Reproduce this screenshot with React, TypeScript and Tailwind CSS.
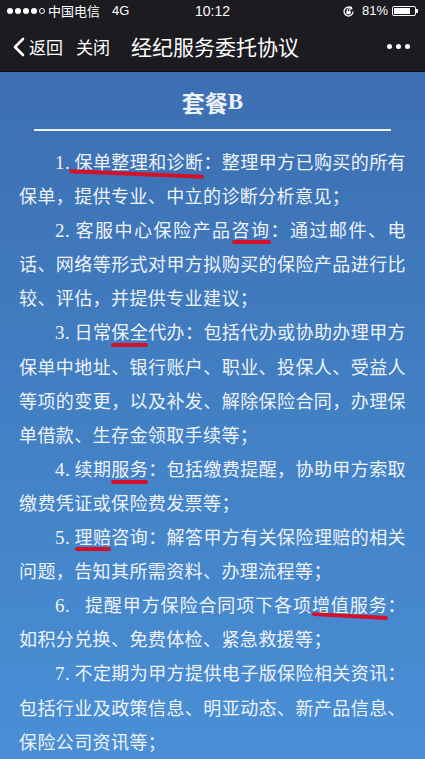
import React from "react";

const CJK = '"Noto Sans CJK SC", "Noto Sans", sans-serif';
const SERIF = '"Liberation Serif", "Noto Sans CJK SC", serif';

/** --- red hand-drawn mark under a phrase --- */
const Mark: React.FC<{ children: React.ReactNode; cls: string }> = ({ children, cls }) => (
  <span className="relative">
    {children}
    <span className={`absolute h-[4px] rounded-full bg-[#d3122a] ${cls}`} />
  </span>
);

const Num: React.FC<{ n: string }> = ({ n }) => (
  <span className="text-[19px] leading-none" style={{ fontFamily: SERIF }}>
    {n}
  </span>
);

// full line: stretched edge to edge
const Full: React.FC<{ children: React.ReactNode; indent?: boolean }> = ({ children, indent }) => (
  <div className={`h-[34.1px] overflow-visible text-justify [text-align-last:justify] whitespace-nowrap ${indent ? "pl-[36px]" : ""}`}>
    {children}
  </div>
);

// last line of a paragraph
const Last: React.FC<{ children: React.ReactNode }> = ({ children }) => (
  <div className="h-[34.1px] whitespace-nowrap">{children}</div>
);

const StatusBar = () => (
  <div className="grid h-[22px] grid-cols-[1fr_auto_1fr] items-center bg-[#1c1b20] px-[7px] text-[13px] text-white">
    <div className="flex items-center">
      <div className="flex items-center gap-[2px]">
        <span className="h-[6px] w-[6px] rounded-full bg-white" />
        <span className="h-[6px] w-[6px] rounded-full bg-white" />
        <span className="h-[6px] w-[6px] rounded-full bg-white" />
        <span className="h-[6px] w-[6px] rounded-full bg-white" />
        <span className="h-[6px] w-[6px] rounded-full border border-white" />
      </div>
      <span className="ml-[3px]">中国电信</span>
      <span className="ml-[12px]" style={{ fontFamily: '"Liberation Sans", sans-serif' }}>4G</span>
    </div>
    <div className="text-[14px] font-medium" style={{ fontFamily: '"Liberation Sans", sans-serif' }}>
      10:12
    </div>
    <div className="flex items-center justify-end" style={{ fontFamily: '"Liberation Sans", sans-serif' }}>
      <svg width="13" height="13" viewBox="0 0 13 13" className="mr-[7px]">
        <path d="M11 6.5a4.5 4.5 0 1 1-1.6-3.45" fill="none" stroke="white" strokeWidth="1.3" />
        <path d="M9.2 1.6l0.6 2.1-2.1 0.3" fill="none" stroke="white" strokeWidth="1.2" />
        <rect x="4.3" y="6" width="4.4" height="3.2" rx="0.5" fill="white" />
        <path d="M5.2 6V5a1.3 1.3 0 0 1 2.6 0v1" fill="none" stroke="white" strokeWidth="1" />
      </svg>
      <span>81%</span>
      <div className="ml-[4px] flex items-center">
        <div className="h-[10px] w-[24px] rounded-[2px] border border-white p-[1px]">
          <div className="h-full w-[80%] bg-white" />
        </div>
        <div className="h-[4px] w-[2px] rounded-r-[1px] bg-white" />
      </div>
    </div>
  </div>
);

const NavBar = () => (
  <div className="flex h-[50px] items-center border-b border-[#101014] bg-[#1c1b20] text-white">
    <svg width="14" height="20" viewBox="0 0 14 20" className="ml-[12px]">
      <path d="M11 2L3 10l8 8" fill="none" stroke="white" strokeWidth="2.6" strokeLinecap="round" strokeLinejoin="round" />
    </svg>
    <span className="ml-[3px] text-[17px]">返回</span>
    <span className="ml-[13px] text-[17px]">关闭</span>
    <span className="ml-[21px] text-[21px]">经纪服务委托协议</span>
    <div className="ml-auto mr-[15px] flex gap-[4px]">
      <span className="h-[5px] w-[5px] rounded-full bg-white" />
      <span className="h-[5px] w-[5px] rounded-full bg-white" />
      <span className="h-[5px] w-[5px] rounded-full bg-white" />
    </div>
  </div>
);

export default function App() {
  return (
    <div className="flex min-h-[759px] w-full flex-col" style={{ fontFamily: CJK }}>
      <StatusBar />
      <NavBar />
      <div className="flex-1 bg-gradient-to-b from-[#3c6fb1] via-[#4280c4] to-[#4a8fd6] pb-[4px]">
        <div className="mt-[15px] flex h-[30px] items-center justify-center text-[23px] font-bold text-[#eef3fa]">
          套餐<span style={{ fontFamily: SERIF }}>B</span>
        </div>
        <div className="mx-[34px] mt-[12px] h-[2px] bg-[#eef3fa]" />
        <div className="mt-[13px] px-[19px] text-[18px] leading-[34px] tracking-[0.4px] text-[#eef3fa]">
          <Full indent>
            <Num n="1." /> <Mark cls="-left-[6px] right-0 top-[calc(50%+11px)] rotate-[2.5deg]">保单整理和诊断</Mark>：整理甲方已购买的所有
          </Full>
          <Last>保单，提供专业、中立的诊断分析意见；</Last>

          <Full indent>
            <Num n="2." /> 客服中心保险产品<Mark cls="left-0 right-0 top-[calc(50%+11px)]">咨询</Mark>：通过邮件、电
          </Full>
          <Full>话、网络等形式对甲方拟购买的保险产品进行比</Full>
          <Last>较、评估，并提供专业建议；</Last>

          <Full indent>
            <Num n="3." /> 日常<Mark cls="left-0 right-0 top-[calc(50%+12px)]">保全</Mark>代办：包括代办或协助办理甲方
          </Full>
          <Full>保单中地址、银行账户、职业、投保人、受益人</Full>
          <Full>等项的变更，以及补发、解除保险合同，办理保</Full>
          <Last>单借款、生存金领取手续等；</Last>

          <Full indent>
            <Num n="4." /> 续期<Mark cls="left-0 right-0 top-[calc(50%+12px)]">服务</Mark>：包括缴费提醒，协助甲方索取
          </Full>
          <Last>缴费凭证或保险费发票等；</Last>

          <Full indent>
            <Num n="5." /> <Mark cls="left-0 right-0 top-[calc(50%+11px)]">理赔</Mark>咨询：解答甲方有关保险理赔的相关
          </Full>
          <Last>问题，告知其所需资料、办理流程等；</Last>

          <Full indent>
            <Num n="6." />&nbsp;&nbsp; 提醒甲方保险合同项下各项<Mark cls="left-0 right-0 top-[calc(50%+10px)] rotate-[3deg]">增值服务</Mark>：
          </Full>
          <Last>如积分兑换、免费体检、紧急救援等；</Last>

          <Full indent>
            <Num n="7." /> 不定期为甲方提供电子版保险相关资讯：
          </Full>
          <Full>包括行业及政策信息、明亚动态、新产品信息、</Full>
          <Last>保险公司资讯等；</Last>
        </div>
      </div>
    </div>
  );
}
